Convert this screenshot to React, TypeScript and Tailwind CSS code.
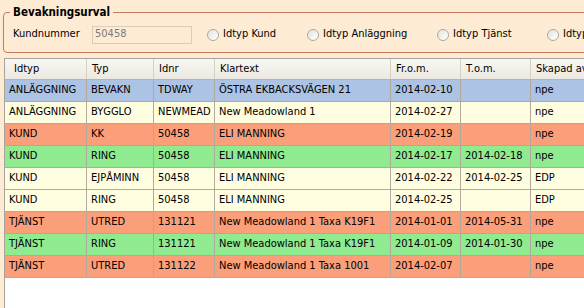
import React from 'react';

type Row = {
  idtyp: string;
  typ: string;
  idnr: string;
  klartext: string;
  from: string;
  tom: string;
  skapad: string;
  color: string;
};

const ROWS: Row[] = [
  { idtyp: 'ANLÄGGNING', typ: 'BEVAKN', idnr: 'TDWAY', klartext: 'ÖSTRA EKBACKSVÄGEN 21', from: '2014-02-10', tom: '', skapad: 'npe', color: 'bg-[#adc3e3]' },
  { idtyp: 'ANLÄGGNING', typ: 'BYGGLO', idnr: 'NEWMEAD', klartext: 'New Meadowland 1', from: '2014-02-27', tom: '', skapad: 'npe', color: 'bg-[#fffde0]' },
  { idtyp: 'KUND', typ: 'KK', idnr: '50458', klartext: 'ELI MANNING', from: '2014-02-19', tom: '', skapad: 'npe', color: 'bg-[#fb9f7b]' },
  { idtyp: 'KUND', typ: 'RING', idnr: '50458', klartext: 'ELI MANNING', from: '2014-02-17', tom: '2014-02-18', skapad: 'npe', color: 'bg-[#90ea90]' },
  { idtyp: 'KUND', typ: 'EJPÅMINN', idnr: '50458', klartext: 'ELI MANNING', from: '2014-02-22', tom: '2014-02-25', skapad: 'EDP', color: 'bg-[#fffde0]' },
  { idtyp: 'KUND', typ: 'RING', idnr: '50458', klartext: 'ELI MANNING', from: '2014-02-25', tom: '', skapad: 'EDP', color: 'bg-[#fffde0]' },
  { idtyp: 'TJÄNST', typ: 'UTRED', idnr: '131121', klartext: 'New Meadowland 1 Taxa K19F1', from: '2014-01-01', tom: '2014-05-31', skapad: 'npe', color: 'bg-[#fb9f7b]' },
  { idtyp: 'TJÄNST', typ: 'RING', idnr: '131121', klartext: 'New Meadowland 1 Taxa K19F1', from: '2014-01-09', tom: '2014-01-30', skapad: 'npe', color: 'bg-[#90ea90]' },
  { idtyp: 'TJÄNST', typ: 'UTRED', idnr: '131122', klartext: 'New Meadowland 1 Taxa 1001', from: '2014-02-07', tom: '', skapad: 'npe', color: 'bg-[#fb9f7b]' },
];

const COLS = [
  { label: 'Idtyp', w: 'w-[82px]', key: 'idtyp' },
  { label: 'Typ', w: 'w-[67px]', key: 'typ' },
  { label: 'Idnr', w: 'w-[61px]', key: 'idnr' },
  { label: 'Klartext', w: 'w-[176px]', key: 'klartext' },
  { label: 'Fr.o.m.', w: 'w-[70px]', key: 'from' },
  { label: 'T.o.m.', w: 'w-[70px]', key: 'tom' },
  { label: 'Skapad av', w: 'w-[80px]', key: 'skapad' },
] as const;

const Radio = ({ label }: { label: string }) => (
  <label className="flex items-center gap-[4px] whitespace-nowrap">
    <span className="w-[12px] h-[12px] shrink-0 rounded-full border border-[#a9a9a2] bg-gradient-to-br from-[#e4e3dc] to-white" />
    <span>{label}</span>
  </label>
);

export default function App() {
  return (
    <div
      className="w-[584px] h-[308px] overflow-hidden bg-[#fdebd4] text-[11px] text-black font-stretch-condensed"
      style={{ fontFamily: '"DejaVu Sans Condensed", "DejaVu Sans", sans-serif' }}
    >
      {/* Filter group */}
      <div className="pt-[12px] pl-[3px]">
        <div className="relative w-[620px] h-[41px] border border-[#c67a62] rounded-[4px]">
          <span className="absolute -top-[8px] left-[6px] px-[3px] bg-[#fdebd4] font-bold text-[11.5px] leading-[14px]">
            Bevakningsurval
          </span>
          <div className="flex items-center h-full pl-[9px] pt-[4px]">
            <span className="w-[80px]">Kundnummer</span>
            <div className="w-[100px] h-[18px] shrink-0 border border-[#d9ccb8] px-[2px] flex items-center text-[#7d7a74]">
              50458
            </div>
            <div className="flex items-center ml-[15px]">
              <div className="w-[100px]"><Radio label="Idtyp Kund" /></div>
              <div className="w-[130px]"><Radio label="Idtyp Anläggning" /></div>
              <div className="w-[110px]"><Radio label="Idtyp Tjänst" /></div>
              <Radio label="Idtyp Övrigt" />
            </div>
          </div>
        </div>
      </div>

      {/* Grid */}
      <div className="ml-[4px] mt-[5px] h-[260px] bg-white border-l border-t border-[#a9a49a]">
        <div className="flex h-[21px] bg-gradient-to-b from-[#f8f7f3] to-[#ebe9e1] border-b border-[#b9b4a8]">
          {COLS.map((c, i) => (
            <div
              key={c.key}
              className={`${c.w} shrink-0 flex items-center border-r border-[#d4d0c4] whitespace-nowrap ${i === 0 ? 'pl-[9px]' : 'pl-[5px]'}`}
            >
              {c.label}
            </div>
          ))}
        </div>
        {ROWS.map((r, ri) => (
          <div key={ri} className={`flex h-[22px] ${r.color} border-b border-[#b0a99c]`}>
            {COLS.map((c) => (
              <div
                key={c.key}
                className={`${c.w} shrink-0 flex items-center pl-[4px] border-r border-[#b0a99c] whitespace-nowrap overflow-hidden`}
              >
                {r[c.key]}
              </div>
            ))}
          </div>
        ))}
      </div>
    </div>
  );
}
